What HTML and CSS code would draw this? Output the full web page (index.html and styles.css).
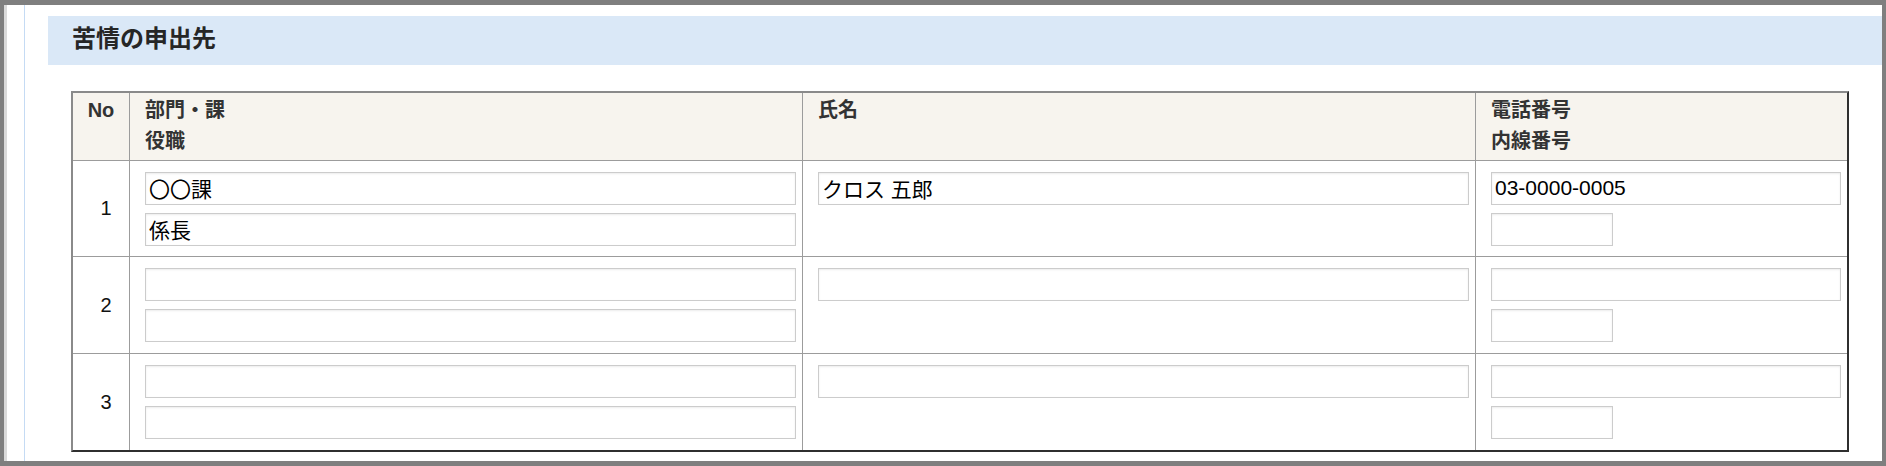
FILE: index.html
```html
<!DOCTYPE html>
<html lang="ja">
<head>
<meta charset="utf-8">
<title>苦情の申出先</title>
<link rel="stylesheet" href="styles.css">
</head>
<body>
<div class="window">
  <div class="rail"></div>
  <div class="content">
    <h2 class="section-title">苦情の申出先</h2>
    <table class="contacts">
      <colgroup>
        <col class="c-no">
        <col class="c-dept">
        <col class="c-name">
        <col class="c-tel">
      </colgroup>
      <thead>
        <tr>
          <th class="no">No</th>
          <th>部門・課<br>役職</th>
          <th>氏名</th>
          <th>電話番号<br>内線番号</th>
        </tr>
      </thead>
      <tbody>
        <tr>
          <td class="no">1</td>
          <td><div class="stack"><input class="field" type="text" value="〇〇課"><input class="field" type="text" value="係長"></div></td>
          <td><div class="stack"><input class="field" type="text" value="クロス 五郎"></div></td>
          <td><div class="stack"><input class="field" type="text" value="03-0000-0005"><input class="field ext" type="text" value=""></div></td>
        </tr>
        <tr class="mid">
          <td class="no">2</td>
          <td><div class="stack"><input class="field" type="text" value=""><input class="field" type="text" value=""></div></td>
          <td><div class="stack"><input class="field" type="text" value=""></div></td>
          <td><div class="stack"><input class="field" type="text" value=""><input class="field ext" type="text" value=""></div></td>
        </tr>
        <tr class="last">
          <td class="no">3</td>
          <td><div class="stack"><input class="field" type="text" value=""><input class="field" type="text" value=""></div></td>
          <td><div class="stack"><input class="field" type="text" value=""></div></td>
          <td><div class="stack"><input class="field" type="text" value=""><input class="field ext" type="text" value=""></div></td>
        </tr>
      </tbody>
    </table>
  </div>
</div>
</body>
</html>
```

FILE: styles.css
```css
* { box-sizing: border-box; }
html, body { margin: 0; padding: 0; }
body {
  width: 1886px;
  height: 466px;
  overflow: hidden;
  font-family: "Liberation Sans", "Noto Sans CJK JP", sans-serif;
  color: #333;
  background: #fff;
}
.window {
  width: 1886px;
  height: 466px;
  border-style: solid;
  border-color: #7f7f7f;
  border-width: 5px 4px 5px 4px;
  display: flex;
  background: #fff;
}
.rail {
  width: 21px;
  flex: 0 0 21px;
  border-left: 3px solid #dadada;
  border-right: 1px solid #c5dbf4;
}
.content {
  flex: 1;
  padding: 11px 0 0 23px;
}
.section-title {
  margin: 0;
  height: 49px;
  background: #dae8f7;
  font-size: 24px;
  font-weight: bold;
  color: #262626;
  line-height: 46px;
  padding: 0 0 3px 24px;
}
.contacts {
  margin: 26px 0 0 23px;
  width: 1778px;
  table-layout: fixed;
  border-collapse: separate;
  border-spacing: 0;
  border-style: solid;
  border-width: 2px;
  border-color: #8a8a8a #2f2f2f #2f2f2f #8a8a8a;
}
.c-no { width: 57px; }
.c-dept { width: 673px; }
.c-name { width: 673px; }
.c-tel { width: 371px; }
.contacts th, .contacts td {
  border-right: 1px solid #9c9c9c;
  border-bottom: 1px solid #9c9c9c;
  padding: 0;
}
.contacts th:last-child, .contacts td:last-child { border-right: 0; }
.contacts tr.last td { border-bottom: 0; }
.contacts th {
  background: #f7f4ee;
  text-align: left;
  vertical-align: top;
  font-size: 20px;
  font-weight: bold;
  line-height: 31px;
  height: 68px;
  padding: 2px 6px 1px 15px;
  color: #333;
}
.contacts th.no {
  text-align: center;
  padding: 2px 0 1px 0;
}
.contacts td {
  vertical-align: top;
  padding: 11px 6px 10px 15px;
}
.contacts tr.mid td,
.contacts tr.last td {
  padding-bottom: 11px;
}
.contacts td.no,
.contacts tr.mid td.no,
.contacts tr.last td.no {
  vertical-align: middle;
  text-align: center;
  font-size: 20px;
  color: #111;
  padding: 0 0 0 10px;
}
.stack {
  display: flex;
  flex-direction: column;
  align-items: flex-start;
  gap: 8px;
}
.field {
  display: block;
  width: 100%;
  height: 33px;
  margin: 0;
  border: 1px solid #cccccc;
  border-radius: 0;
  box-shadow: inset 0 1px 2px rgba(0, 0, 0, 0.08);
  background: #fff;
  font-family: "Liberation Sans", "Noto Sans CJK JP", sans-serif;
  font-size: 21px;
  color: #000;
  padding: 0 3px 2px 3px;
  outline: none;
}
.field.ext { width: 122px; }
```
